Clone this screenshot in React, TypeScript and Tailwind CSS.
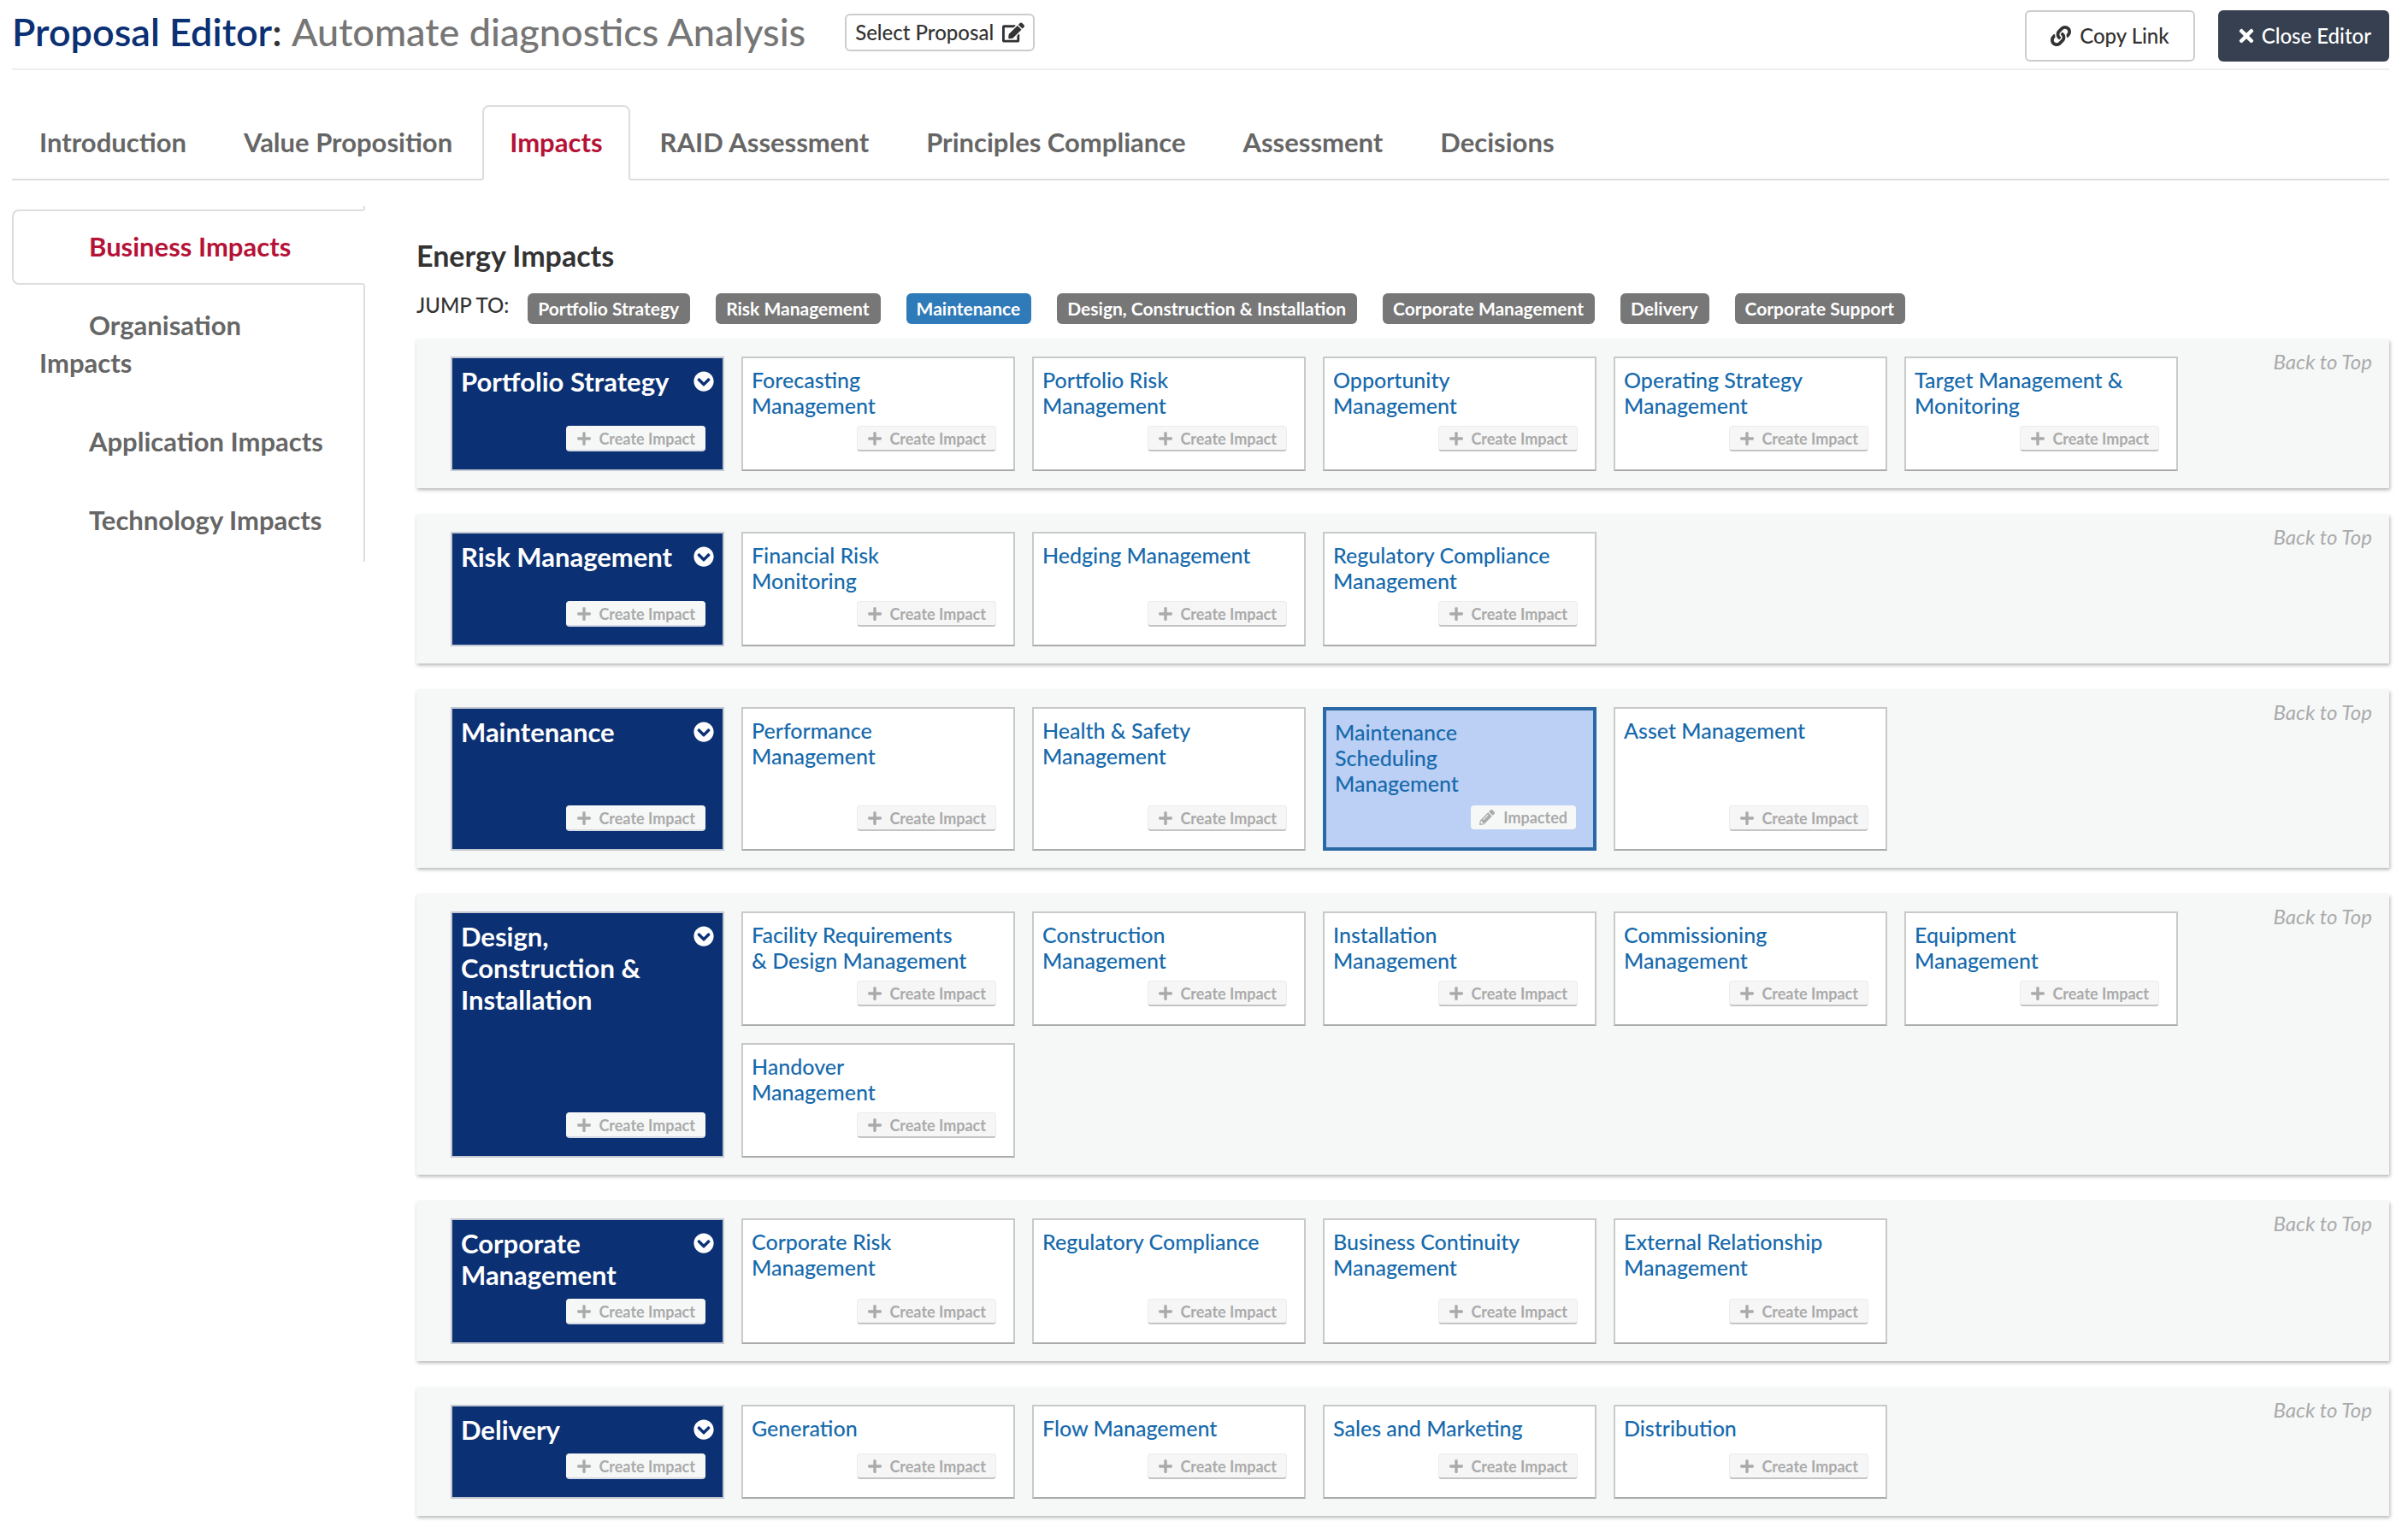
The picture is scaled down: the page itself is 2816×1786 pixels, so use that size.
import React from "react";
import { FaChevronCircleDown, FaEdit, FaLink, FaPencilAlt, FaPlus, FaTimes } from "react-icons/fa";

const TABS = [
  "Introduction",
  "Value Proposition",
  "Impacts",
  "RAID Assessment",
  "Principles Compliance",
  "Assessment",
  "Decisions",
];

const SIDE_TABS = [
  "Business Impacts",
  "Organisation Impacts",
  "Application Impacts",
  "Technology Impacts",
];

const JUMPS = [
  "Portfolio Strategy",
  "Risk Management",
  "Maintenance",
  "Design, Construction & Installation",
  "Corporate Management",
  "Delivery",
  "Corporate Support",
];

type Group = { name: string; items: string[]; impacted?: string };

const GROUPS: Group[] = [
  {
    name: "Portfolio Strategy",
    items: [
      "Forecasting Management",
      "Portfolio Risk Management",
      "Opportunity Management",
      "Operating Strategy Management",
      "Target Management & Monitoring",
    ],
  },
  {
    name: "Risk Management",
    items: ["Financial Risk Monitoring", "Hedging Management", "Regulatory Compliance Management"],
  },
  {
    name: "Maintenance",
    items: [
      "Performance Management",
      "Health & Safety Management",
      "Maintenance Scheduling Management",
      "Asset Management",
    ],
    impacted: "Maintenance Scheduling Management",
  },
  {
    name: "Design, Construction & Installation",
    items: [
      "Facility Requirements & Design Management",
      "Construction Management",
      "Installation Management",
      "Commissioning Management",
      "Equipment Management",
      "Handover Management",
    ],
  },
  {
    name: "Corporate Management",
    items: [
      "Corporate Risk Management",
      "Regulatory Compliance",
      "Business Continuity Management",
      "External Relationship Management",
    ],
  },
  {
    name: "Delivery",
    items: ["Generation", "Flow Management", "Sales and Marketing", "Distribution"],
  },
];

function CreateButton({ dark = false }: { dark?: boolean }) {
  return (
    <button
      type="button"
      className={
        "flex h-[30px] items-center gap-2 rounded-sm border border-b-2 px-[11px] text-[18px] leading-6 font-bold text-[#aaaaaa] " +
        (dark ? "border-[#f4f6f6] border-b-[#d5dae4] bg-[#f6f8f8]" : "border-[#ececec] border-b-[#c4c4c4] bg-[#f6f6f6]")
      }
    >
      <FaPlus className="size-[18px]" />
      Create Impact
    </button>
  );
}

function HeaderCard({ name }: { name: string }) {
  return (
    <div className="flex w-80 shrink-0 flex-col justify-between border-2 border-[#c3c8d2] bg-[#0b3074] px-2.5 pt-[9px] pb-[21px]">
      <div className="flex items-start justify-between gap-2">
        <h3 className="text-[31px] leading-[37px] font-bold text-white">{name}</h3>
        <button type="button" aria-label={"Expand " + name} className="mt-1.5 shrink-0 text-white">
          <FaChevronCircleDown className="size-6" />
        </button>
      </div>
      <div className="mt-[9px] flex justify-end pr-2.5">
        <CreateButton dark />
      </div>
    </div>
  );
}

function Card({ name, impacted }: { name: string; impacted: boolean }) {
  return (
    <div
      className={
        "flex w-80 flex-col justify-between px-2.5 pt-2.5 pb-[21px] " +
        (impacted ? "border-4 border-[#2b69a6] bg-[#bccff4]" : "border-2 border-[#c9c9c9] border-b-[#ababab] bg-white")
      }
    >
      <a href="#capability" className="max-w-[256px] text-[25px] leading-[30px] font-medium text-[#1569ac]">
        {name}
      </a>
      <div className={"flex justify-end pr-2.5 " + (impacted ? "mt-[11px]" : "mt-[9px]")}>
        {impacted ? (
          <button
            type="button"
            className="flex h-7 items-center gap-2.5 rounded-sm bg-[#f6f8f8] px-2.5 text-[18px] leading-6 font-bold text-[#aaaaaa]"
          >
            <FaPencilAlt className="size-[18px]" />
            Impacted
          </button>
        ) : (
          <CreateButton />
        )}
      </div>
    </div>
  );
}

export default function App() {
  return (
    <div
      id="top"
      className="min-h-screen bg-white pr-[22px] pl-3.5 font-['Lato','Liberation_Sans',sans-serif] text-[#333333]"
    >
      <header className="flex items-start justify-between border-b-2 border-[#eeeeee] pt-3 pb-2">
        <div className="flex items-start gap-[46px]">
          <h1 className="text-[45px] leading-[50px] font-medium">
            <span className="font-semibold text-[#0b3074]">Proposal Editor</span>
            <span className="font-semibold">: </span>
            <span className="text-[#767676]">Automate diagnostics Analysis</span>
          </h1>
          <button
            type="button"
            className="mt-1 flex h-11 items-center gap-2.5 rounded-md border-2 border-[#cccccc] px-2.5 text-[24px] leading-8 font-medium"
          >
            Select Proposal
            <FaEdit className="size-[26px]" />
          </button>
        </div>
        <div className="flex gap-[27px]">
          <button
            type="button"
            className="flex h-[60px] items-center gap-2.5 rounded-md border-2 border-[#cccccc] px-7 text-[24px] font-medium"
          >
            <FaLink className="size-6" />
            Copy Link
          </button>
          <button
            type="button"
            className="flex h-[60px] items-center gap-1.5 rounded-md bg-[#364050] px-[21px] text-[24px] font-medium text-white"
          >
            <FaTimes className="size-6" />
            Close Editor
          </button>
        </div>
      </header>

      <nav className="mt-[41px] flex gap-[3px] border-b-2 border-[#dddddd]">
        {TABS.map((tab) => (
          <a
            key={tab}
            href="#tab"
            className={
              "-mb-0.5 rounded-t-lg border-2 px-[30px] pt-[19px] pb-[21px] text-[31px] leading-11 font-bold " +
              (tab === "Impacts" ? "border-[#dddddd] border-b-white bg-white text-[#b51237]" : "border-transparent text-[#666666]")
            }
          >
            {tab}
          </a>
        ))}
      </nav>

      <div className="mt-[30px] flex items-start gap-[60px]">
        <nav className="flex w-[413px] shrink-0 flex-col gap-1 border-r-2 border-[#dddddd] py-1">
          {SIDE_TABS.map((tab) => (
            <a
              key={tab}
              href="#section"
              className={
                "-mr-0.5 rounded-l-lg border-2 px-[30px] pt-[19px] pb-[21px] indent-[58px] text-[31px] leading-11 font-bold " +
                (tab === "Business Impacts"
                  ? "border-[#dddddd] border-r-white bg-white text-[#b51237]"
                  : "border-transparent text-[#666666]")
              }
            >
              {tab}
            </a>
          ))}
        </nav>

        <main className="min-w-0 flex-1 pt-9">
          <h2 className="text-[34px] leading-11 font-bold">Energy Impacts</h2>
          <div className="mt-5 flex items-start">
            <span className="mr-[22px] text-[24px] leading-8 font-medium">JUMP TO:</span>
            <div className="flex flex-wrap gap-[30px]">
              {JUMPS.map((jump) => (
                <a
                  key={jump}
                  href="#group"
                  className={
                    "mt-0.5 flex h-9 items-center rounded-md pr-[13px] pl-3 text-[21px] leading-6 font-bold text-white " +
                    (jump === "Maintenance" ? "bg-[#2f7ab8]" : "bg-[#777777]")
                  }
                >
                  {jump}
                </a>
              ))}
            </div>
          </div>

          <div className="mt-[18px] flex flex-col gap-[31px] pb-3">
            {GROUPS.map((group) => (
              <section
                key={group.name}
                className="flex items-stretch gap-5 bg-[#f6f8f8] py-5 pr-5 pl-10 shadow-[1px_2px_4px_rgba(0,0,0,0.3)]"
              >
                <HeaderCard name={group.name} />
                <div className="flex flex-1 flex-wrap gap-5">
                  {group.items.map((item) => (
                    <Card key={item} name={item} impacted={item === group.impacted} />
                  ))}
                </div>
                <a href="#top" className="-mt-2.5 text-[24px] leading-8 text-[#aaaaaa] italic">
                  Back to Top
                </a>
              </section>
            ))}
          </div>
        </main>
      </div>
    </div>
  );
}
